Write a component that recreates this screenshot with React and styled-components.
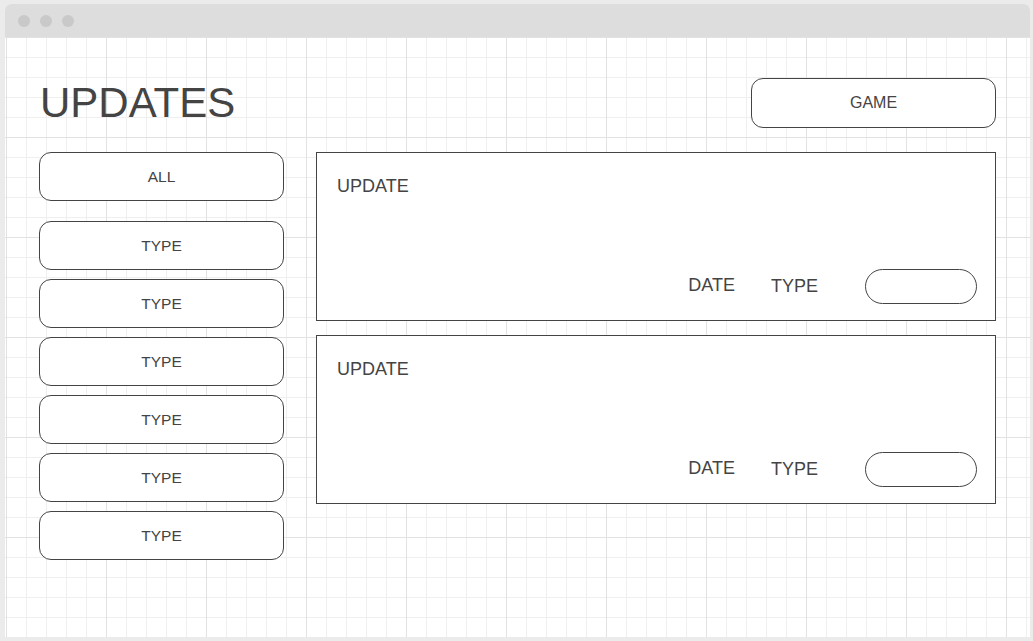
import React from 'react'
import styled, {createGlobalStyle} from "styled-components";

const GlobalStyle = createGlobalStyle`
    html, body {
        margin: 0;
        padding: 0;
        background: #ebebeb;
    }
    body {
        font-family: "Liberation Sans", Arial, sans-serif;
        color: #444;
    }
`;

const Page = styled.div`
    padding: 4px 3px 4px 5px;
    width: 1033px;
    height: 641px;
    box-sizing: border-box;
`;

const Window = styled.div`
    width: 1025px;
    height: 633px;
    display: flex;
    flex-direction: column;
    border-radius: 6px 6px 0 0;
    overflow: hidden;
    background: #fff;
`;

const TitleBar = styled.div`
    height: 33px;
    flex-shrink: 0;
    background: #dddddd;
    display: flex;
    align-items: center;
    gap: 10px;
    padding-left: 13px;
`;

const Dot = styled.span`
    width: 12px;
    height: 12px;
    border-radius: 50%;
    background: #c9c9c9;
`;

const Canvas = styled.div`
    flex: 1;
    padding: 41px 34px 0 34px;
    background-color: #fff;
    background-image:
        linear-gradient(to right, #e2e2e2 1px, transparent 1px),
        linear-gradient(to bottom, #e2e2e2 1px, transparent 1px),
        linear-gradient(to right, #efefef 1px, transparent 1px),
        linear-gradient(to bottom, #efefef 1px, transparent 1px);
    background-size: 100px 100px, 100px 100px, 20px 20px, 20px 20px;
    background-position: 1px 0, 1px 0, 1px 0, 1px 0;
`;

const Header = styled.div`
    display: flex;
    align-items: center;
    justify-content: space-between;
    height: 50px;
    margin-bottom: 24px;
`;

const Title = styled.h1`
    margin: 0 0 0 1px;
    font-weight: normal;
    font-size: 42px;
    color: #444;
`;

const RoundButton = styled.div`
    width: 245px;
    height: ${props => props.$h || 49}px;
    box-sizing: border-box;
    border: 1px solid #444;
    border-radius: 12px;
    background: #fff;
    display: flex;
    align-items: center;
    justify-content: center;
    font-size: ${props => props.$size || 15.5}px;
    color: #444;
`;

const Main = styled.div`
    display: grid;
    grid-template-columns: 245px 680px;
    column-gap: 32px;
    align-items: start;
`;

const Sidebar = styled.div`
    display: flex;
    flex-direction: column;
    gap: 9px;

    & > :first-child {
        margin-bottom: 11px;
    }
`;

const List = styled.div`
    display: flex;
    flex-direction: column;
    gap: 14px;
`;

const Card = styled.div`
    height: 169px;
    box-sizing: border-box;
    border: 1px solid #444;
    background: #fff;
    padding: 23px 18px 16px 20px;
    display: flex;
    flex-direction: column;
    justify-content: space-between;
`;

const CardTitle = styled.div`
    font-size: 18px;
    line-height: 20px;
`;

const CardFooter = styled.div`
    display: flex;
    align-items: center;
    justify-content: flex-end;
`;

const Meta = styled.span`
    font-size: 18px;
    margin-right: ${props => props.$gap}px;
    position: relative;
    top: ${props => props.$shift || 0}px;
`;

const Pill = styled.div`
    width: 112px;
    height: 35px;
    box-sizing: border-box;
    border: 1px solid #444;
    border-radius: 18px;
`;

const types = ['TYPE', 'TYPE', 'TYPE', 'TYPE', 'TYPE', 'TYPE'];
const updates = [1, 2];

const App = () => {
    return (
        <Page>
            <GlobalStyle />
            <Window>
                <TitleBar>
                    <Dot />
                    <Dot />
                    <Dot />
                </TitleBar>
                <Canvas>
                    <Header>
                        <Title>UPDATES</Title>
                        <RoundButton $h={50} $size={16}>GAME</RoundButton>
                    </Header>
                    <Main>
                        <Sidebar>
                            <RoundButton>ALL</RoundButton>
                            {types.map((t, i) => (
                                <RoundButton key={i}>{t}</RoundButton>
                            ))}
                        </Sidebar>
                        <List>
                            {updates.map(u => (
                                <Card key={u}>
                                    <CardTitle>UPDATE</CardTitle>
                                    <CardFooter>
                                        <Meta $gap={36} $shift={-1}>DATE</Meta>
                                        <Meta $gap={47}>TYPE</Meta>
                                        <Pill />
                                    </CardFooter>
                                </Card>
                            ))}
                        </List>
                    </Main>
                </Canvas>
            </Window>
        </Page>
    )
}
export default App;
